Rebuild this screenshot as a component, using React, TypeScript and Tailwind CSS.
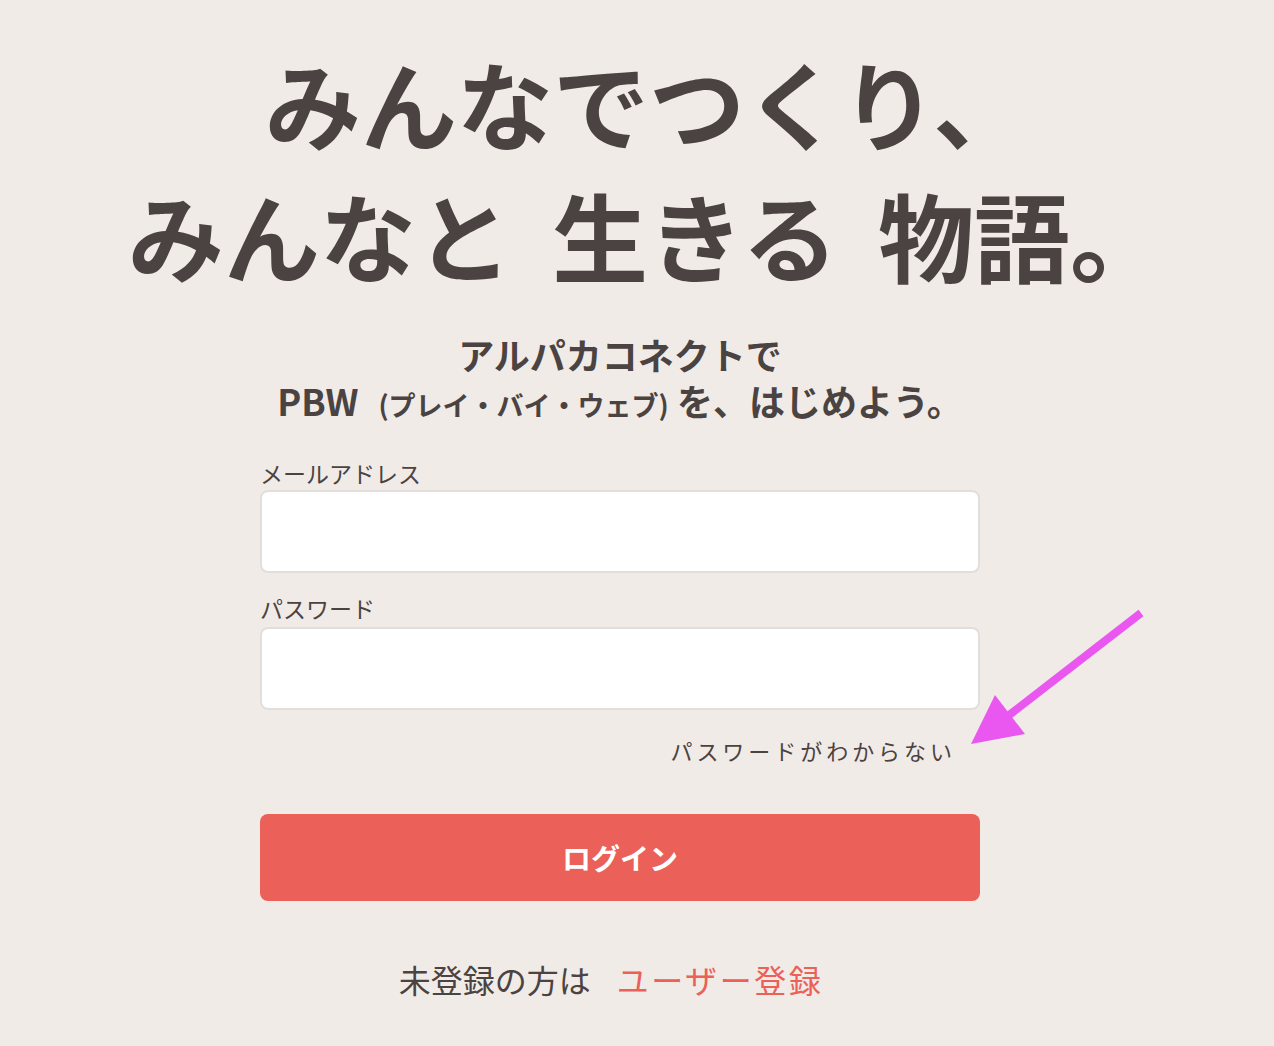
const jp = "font-['Noto_Sans_CJK_JP','Noto_Sans',sans-serif]";

function Arrow() {
  return (
    <svg className="pointer-events-none absolute left-0 top-0" width="1274" height="1046">
      <line x1="1141" y1="613" x2="1008" y2="716" stroke="#e957f0" strokeWidth="8" />
      <polygon points="971,744 995,695 1025,734" fill="#e957f0" />
    </svg>
  );
}

export default function App() {
  return (
    <div className={`relative min-h-[1046px] w-full bg-[#f0ebe7] text-[#4b4341] ${jp}`}>
      <div className="flex w-[1240px] flex-col items-center pt-[36px]">
        <h1 className="pl-[54px] text-center text-[96px] font-bold leading-[132px]">
          <div>みんなでつくり、</div>
          <div>
            みんなと<span className="inline-block w-[40px]" />生きる<span className="inline-block w-[40px]" />物語。
          </div>
        </h1>

        <div className="mt-[31px] text-center text-[36px] font-bold leading-[46px]">
          <div>アルパカコネクトで</div>
          <div>
            PBW<span className="ml-[20px] text-[27px]">(プレイ・バイ・ウェブ)</span> を、はじめよう。
          </div>
        </div>

        <form className="mt-[30px] w-[720px]" onSubmit={(e) => e.preventDefault()}>
          <label className="block text-[23px] leading-[30px]">メールアドレス</label>
          <input
            type="email"
            className="mt-[2px] block h-[83px] w-full rounded-[8px] border-2 border-[#e2dedb] bg-white px-4 text-xl outline-none"
          />
          <label className="mt-[20px] block text-[23px] leading-[30px]">パスワード</label>
          <input
            type="password"
            className="mt-[4px] block h-[83px] w-full rounded-[8px] border-2 border-[#e2dedb] bg-white px-4 text-xl outline-none"
          />
          <div className="mt-[25px] flex justify-end pr-[24px]">
            <a href="#" className="text-[22px] leading-[30px] tracking-[0.18em]">
              パスワードがわからない
            </a>
          </div>
          <button
            type="submit"
            className="mt-[49px] flex h-[87px] w-full items-center justify-center rounded-[8px] bg-[#eb6058] text-[29px] font-bold text-white"
          >
            ログイン
          </button>
          <div className="mt-[58px] flex items-center justify-center gap-[26px] pr-[18px] text-[32px] leading-[40px]">
            <span>未登録の方は</span>
            <a href="#" className="tracking-[0.08em] text-[#eb6058]">
              ユーザー登録
            </a>
          </div>
        </form>
      </div>
      <Arrow />
    </div>
  );
}
